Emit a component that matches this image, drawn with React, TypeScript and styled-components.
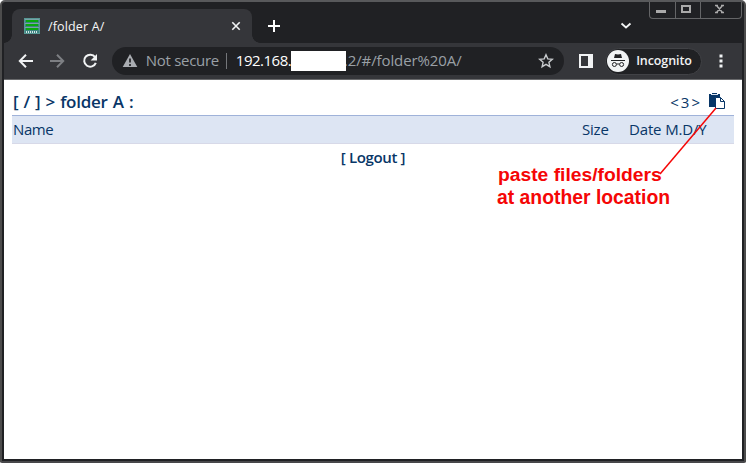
import React from "react";
import styled, { createGlobalStyle } from "styled-components";

const GlobalStyle = createGlobalStyle`
  * { box-sizing: border-box; }
  body { margin: 0; background: #fff; font-family: "Open Sans", "Noto Sans", sans-serif; }
`;

const Window = styled.div`
  position: relative;
  display: flex;
  flex-direction: column;
  width: 746px;
  height: 463px;
  overflow: hidden;
  background: #202124;
  border: 2px solid #4c4c4c;
  border-top-color: #58595b;
  border-bottom-color: #47474a;
  border-radius: 5px 5px 2px 2px;
  padding: 0 2px 2px;
`;

const TitleBar = styled.header`
  display: flex;
  height: 41px;
  padding: 7px 0 0 8px;
`;

const Tab = styled.div`
  position: relative;
  display: flex;
  align-items: center;
  width: 240px;
  height: 34px;
  padding: 0 10px 0 12px;
  background: #35363a;
  border-radius: 8px 8px 0 0;
  &::before, &::after {
    content: "";
    position: absolute;
    bottom: 0;
    width: 8px;
    height: 8px;
  }
  &::before { left: -8px; background: radial-gradient(circle at 0 0, transparent 7.5px, #35363a 8px); }
  &::after { right: -8px; background: radial-gradient(circle at 100% 0, transparent 7.5px, #35363a 8px); }
`;

const Text = styled.span<{ $size: number; $color: string; $spacing?: number; $weight?: number }>`
  font-size: ${p => p.$size}px;
  color: ${p => p.$color};
  letter-spacing: ${p => p.$spacing ?? 0}px;
  font-weight: ${p => p.$weight ?? 400};
  line-height: 20px;
  white-space: pre;
`;

const TabTitle = styled(Text)`
  flex: 1;
  margin-left: 8px;
  padding-top: 1px;
`;

const Icon = styled.svg`
  display: block;
  flex: none;
`;

const NewTab = styled(Icon)`
  margin: 10px 0 0 15px;
`;

const TabSearch = styled(Icon)`
  margin: 13px 17px 0 auto;
`;

const WindowControls = styled.div`
  display: flex;
  width: 93px;
  height: 19px;
  margin-top: -9px;
  border: 1px solid #646567;
  border-top: 0;
  border-radius: 0 0 4px 4px;
`;

const Control = styled.div<{ $width: number }>`
  display: flex;
  align-items: center;
  justify-content: center;
  width: ${p => p.$width}px;
  padding: 0 3px 2px 0;
  & + & { border-left: 1px solid #646567; }
`;

const Toolbar = styled.nav`
  display: flex;
  align-items: center;
  height: 37px;
  padding: 0 13px 0 13px;
  background: #35363a;
  border-bottom: 1px solid #696a6c;
`;

const NavIcons = styled.div`
  display: flex;
  justify-content: space-between;
  width: 81px;
  margin-right: 14px;
`;

const AddressBar = styled.div`
  display: flex;
  align-items: center;
  width: 453px;
  height: 28px;
  padding: 0 10px 0 10px;
  background: #202124;
  border-radius: 14px;
`;

const AddressText = styled(Text)`
  padding-bottom: 2px;
`;

const Security = styled(AddressText)`
  width: 80px;
  margin-left: 8px;
`;

const Divider = styled.div`
  width: 1px;
  height: 16px;
  margin-right: 9px;
  background: #74767a;
`;

const Host = styled(AddressText)`
  width: 55px;
`;

const Redaction = styled.div`
  flex: none;
  width: 55px;
  height: 20px;
  background: #fff;
  z-index: 1;
`;

const Path = styled(AddressText)`
  flex: 1;
  margin-left: -2px;
`;

const SidePanel = styled(Icon)`
  margin-left: 14px;
`;

const Profile = styled.div`
  display: flex;
  align-items: center;
  gap: 7px;
  width: 97px;
  height: 27px;
  margin: 0 11px 0 11px;
  padding-left: 1px;
  background: #202124;
  border: 1px solid #414246;
  border-radius: 14px;
`;

const Page = styled.main`
  flex: 1;
  padding: 12px 8px 0;
  background: #fff;
`;

const PageHeader = styled.div`
  display: flex;
  align-items: center;
  height: 23px;
  padding: 0 9px 4px 1px;
`;

const Location = styled(Text)`
  flex: 1;
  word-spacing: 1px;
`;

const Selection = styled(Text)`
  padding-top: 1px;
`;

const Clipboard = styled(Icon)`
  margin: -2px 0 0 7px;
`;

const TableHead = styled.div`
  display: grid;
  grid-template-columns: 569px 47px 1fr;
  align-items: center;
  height: 29px;
  padding: 0 0 2px 1px;
  background: #dde5f3;
  border-top: 1px solid #9fb2d9;
  border-bottom: 1px solid #d7d9e8;
`;

const Footer = styled.div`
  display: flex;
  justify-content: center;
  padding-top: 3px;
`;

const Callout = styled.div`
  position: absolute;
  left: 495px;
  top: 161px;
  display: flex;
  flex-direction: column;
  font-family: "Liberation Sans", Arial, sans-serif;
`;

const CalloutLine = styled(Text)<{ $indent: number }>`
  line-height: 23px;
  margin-left: ${p => p.$indent}px;
`;

const Pointer = styled.svg`
  position: absolute;
  left: 654px;
  top: 102px;
`;

const navy = "#083667";

export default function App() {
  return (
    <>
      <GlobalStyle />
      <Window>
        <TitleBar>
          <Tab>
            <Icon width="16" height="16" viewBox="0 0 16 16">
              <rect width="16" height="16" fill="#3e8580" />
              <path d="M2 3h12M2 7h12M2 11h12" stroke="#08a80d" strokeWidth="2" />
              <path d="M1 5.5h14M1 9.5h14M1 1.5h14" stroke="#79a3a8" />
              <path d="M2 14h12" stroke="#d5e5e6" strokeWidth="2" strokeDasharray="1 1" />
              <rect x=".5" y=".5" width="15" height="15" fill="none" stroke="#579894" />
            </Icon>
            <TabTitle $size={12.5} $color="#f5f6f7" $spacing={0.15}>/folder A/</TabTitle>
            <Icon width="12" height="12" viewBox="0 0 12 12">
              <path d="m2.3 2.3 7.4 7.4m0-7.4-7.4 7.4" stroke="#f1f3f4" strokeWidth="1.6" />
            </Icon>
          </Tab>
          <NewTab width="14" height="14" viewBox="0 0 14 14">
            <path d="M7 1v12M1 7h12" stroke="#fff" strokeWidth="2" />
          </NewTab>
          <TabSearch width="12" height="8" viewBox="0 0 12 8">
            <path d="m1.5 1.5 4.5 4 4.5-4" fill="none" stroke="#f1f3f4" strokeWidth="1.8" />
          </TabSearch>
          <WindowControls>
            <Control $width={25}>
              <Icon width="12" height="17" viewBox="0 0 12 17"><rect x="1" y="10" width="10" height="3" fill="#aaa" /></Icon>
            </Control>
            <Control $width={25}>
              <Icon width="12" height="17" viewBox="0 0 12 17"><rect x="1" y="6" width="8" height="6" fill="none" stroke="#aaa" strokeWidth="2" /></Icon>
            </Control>
            <Control $width={41}>
              <Icon width="12" height="17" viewBox="0 0 12 17"><path d="m2.5 5.5 6 7m0-7-6 7M1 5.5h3m3 0h3M1 12.5h3m3 0h3" stroke="#aaa" strokeWidth="1.5" /></Icon>
            </Control>
          </WindowControls>
        </TitleBar>

        <Toolbar>
          <NavIcons>
            <Icon width="16" height="16" viewBox="0 0 16 16"><path d="M16 8H3M9 1.8 2.8 8 9 14.2" fill="none" stroke="#f1f3f4" strokeWidth="2" /></Icon>
            <Icon width="16" height="16" viewBox="0 0 16 16"><path d="M1 8h13M8 1.8 14.2 8 8 14.2" fill="none" stroke="#7d7f83" strokeWidth="2" /></Icon>
            <Icon width="16" height="16" viewBox="0 0 16 16">
              <path d="M13.1 4.2A6 6 0 1 0 13.8 9.8" fill="none" stroke="#f1f3f4" strokeWidth="2" />
              <path d="M15 1v6.4H8.6z" fill="#f1f3f4" />
            </Icon>
          </NavIcons>
          <AddressBar>
            <Icon width="16" height="16" viewBox="0 0 16 16">
              <path d="M8 1 .7 14h14.6z" fill="#a9acb1" />
              <path d="M8 5.5v4M8 11v2" stroke="#202124" strokeWidth="1.7" />
            </Icon>
            <Security $size={15} $color="#9aa0a6" $spacing={-0.3}>Not secure</Security>
            <Divider />
            <Host $size={15} $color="#fff" $spacing={-0.5}>192.168.</Host>
            <Redaction />
            <Path $size={15} $color="#9aa0a6" $spacing={-0.1}>.2/#/folder%20A/</Path>
            <Icon width="16" height="16" viewBox="0 0 16 16">
              <path d="m8 1.8 1.8 4.1 4.5.4-3.4 3 1 4.4L8 11.4l-3.9 2.3 1-4.4-3.4-3 4.5-.4z" fill="none" stroke="#c7cacd" strokeWidth="1.4" />
            </Icon>
          </AddressBar>
          <SidePanel width="16" height="16" viewBox="0 0 16 16">
            <path fillRule="evenodd" d="M1 1h14v14H1zM3 3v10h7V3z" fill="#f1f3f4" />
          </SidePanel>
          <Profile>
            <Icon width="22" height="22" viewBox="0 0 22 22">
              <circle cx="11" cy="11" r="11" fill="#f1f3f4" />
              <path d="m7 8 1-4 3 .5 3-.5 1 4z" fill="#202124" />
              <path d="M4 10.5h14" stroke="#202124" />
              <path d="M9.5 14h3" stroke="#202124" />
              <circle cx="7.4" cy="14.5" r="2" fill="none" stroke="#202124" />
              <circle cx="14.6" cy="14.5" r="2" fill="none" stroke="#202124" />
            </Icon>
            <Text $size={12.5} $color="#f1f3f4" $weight={600} $spacing={-0.1}>Incognito</Text>
          </Profile>
          <Icon width="16" height="16" viewBox="0 0 16 16">
            <path d="M6.5 1.5h3v3h-3zM6.5 6.5h3v3h-3zM6.5 11.5h3v3h-3z" fill="#f1f3f4" />
          </Icon>
        </Toolbar>

        <Page>
          <PageHeader>
            <Location $size={17} $color={navy} $weight={600} $spacing={-0.25}>[ / ] &gt; folder A :</Location>
            <Selection $size={15} $color={navy} $spacing={2}>&lt;3&gt;</Selection>
            <Clipboard width="16" height="16" viewBox="0 0 16 16">
              <path d="M0 1h3V0h5v1h3v3H7v10H0z" fill={navy} />
              <path d="M2 1.5h7" stroke="#dce4f0" />
              <path d="M6.5 4.5h5l4 4v7h-9zM11.5 4.5v4h4" fill="#fff" stroke={navy} />
            </Clipboard>
          </PageHeader>
          <TableHead>
            <Text $size={15} $color={navy} $spacing={-0.4}>Name</Text>
            <Text $size={15} $color={navy} $spacing={-0.2}>Size</Text>
            <Text $size={15} $color={navy} $spacing={-0.15}>Date M.D/Y</Text>
          </TableHead>
          <Footer>
            <Text $size={15} $color={navy} $weight={600} $spacing={-0.35}>[ Logout ]</Text>
          </Footer>
        </Page>
        <Callout>
          <CalloutLine $size={19.25} $color="#f50606" $weight={700} $indent={1}>paste files/folders</CalloutLine>
          <CalloutLine $size={19.35} $color="#f50606" $weight={700} $indent={0}>at another location</CalloutLine>
        </Callout>
        <Pointer width="64" height="74" viewBox="0 0 64 74">
          <path d="M4 70 60 4" stroke="#f50606" strokeWidth="1.5" />
        </Pointer>
      </Window>
    </>
  );
}
